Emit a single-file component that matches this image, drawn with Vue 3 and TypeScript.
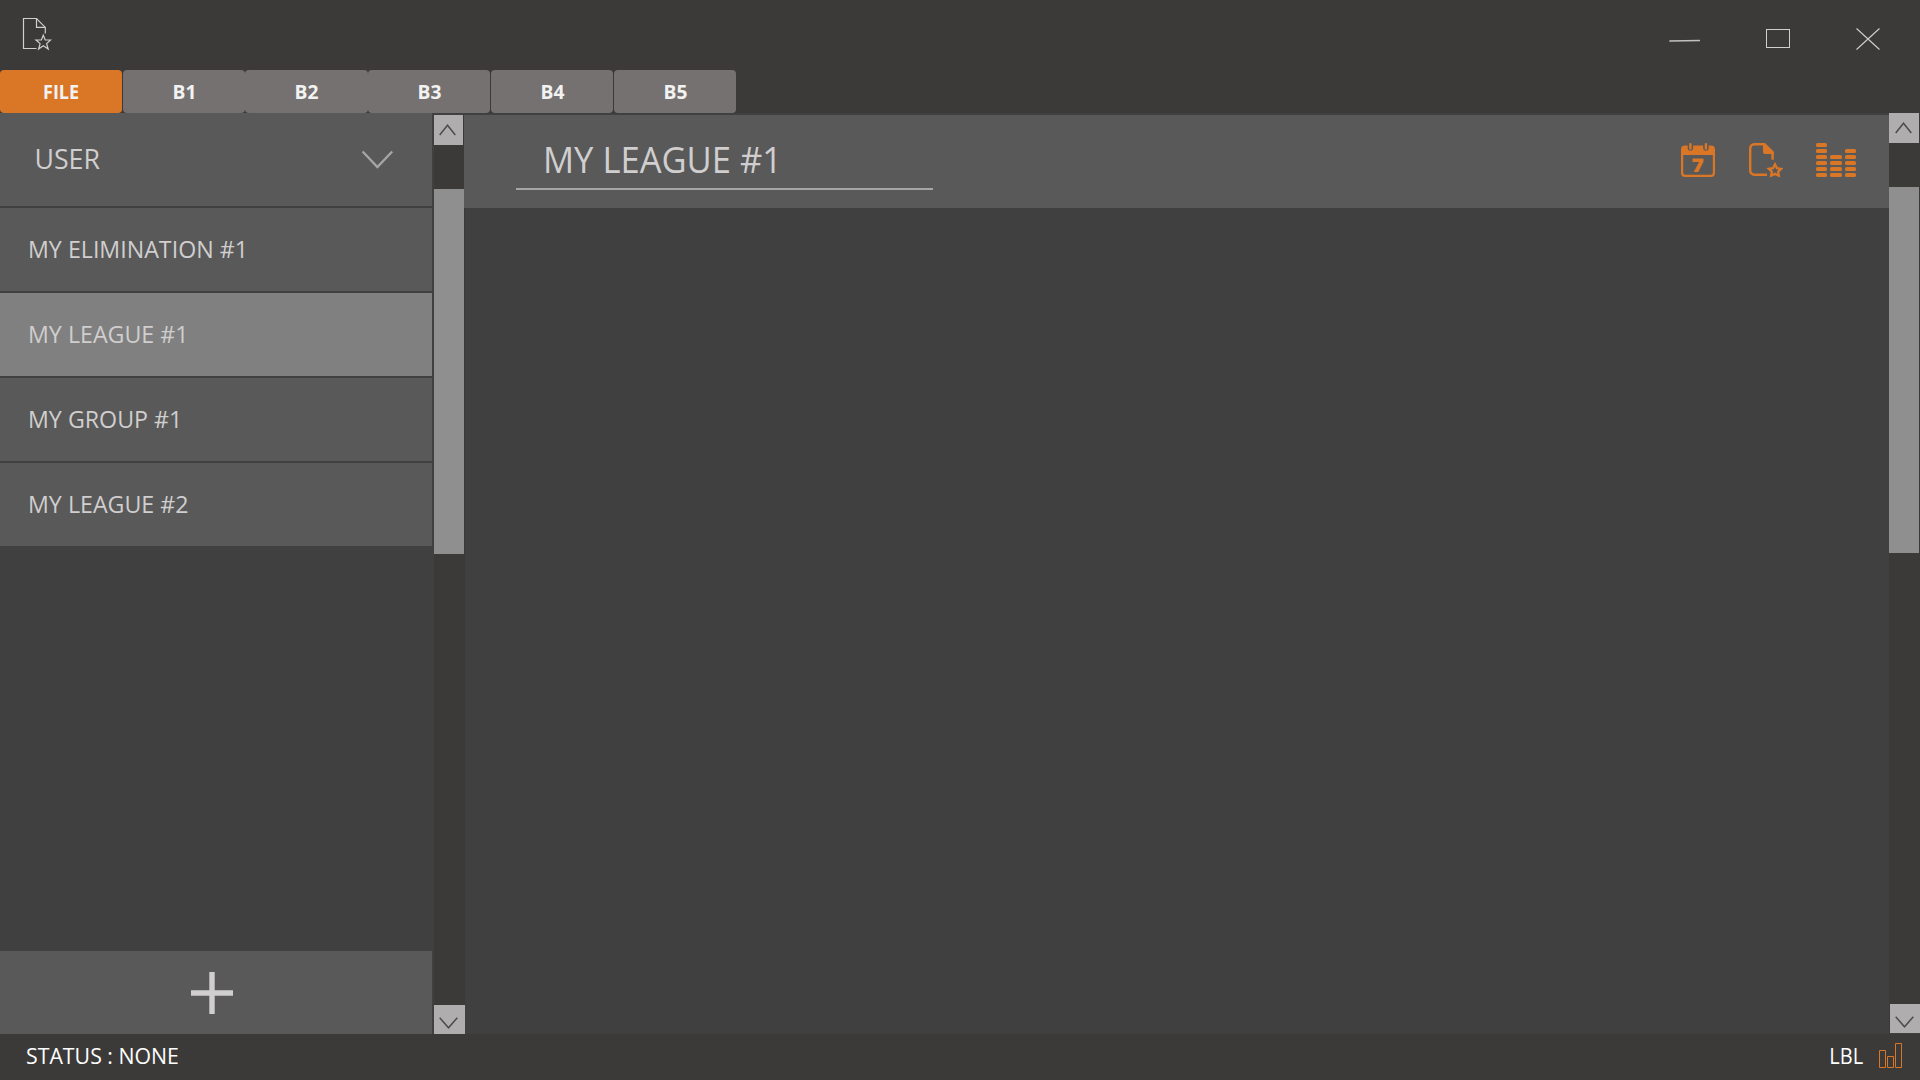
<script setup lang="ts">
import { ref } from 'vue'

const tabs = ['FILE', 'B1', 'B2', 'B3', 'B4', 'B5']
const activeTab = ref('FILE')

const entries = ['MY ELIMINATION #1', 'MY LEAGUE #1', 'MY GROUP #1', 'MY LEAGUE #2']
const selected = ref(1)

// Levels of the equalizer icon: column x, width, first row
const levels = [
  { x: 0, w: 11, from: 0 },
  { x: 14, w: 12, from: 2 },
  { x: 29, w: 11, from: 1 },
]
const rowsFrom = (from: number) => [0, 1, 2, 3, 4, 5].filter((r) => r >= from)
</script>

<template>
  <div class="window">
    <header class="titlebar">
      <svg class="app-icon" width="30" height="34" viewBox="0 0 30 34" fill="none" stroke="#d0cece" stroke-width="1.2">
        <path d="M14.5 31.5H1.5V1.5H14.5L23.3 10.4V16.5" />
        <path d="M14.5 1.5V10.4H23.3" />
        <path d="M21.3 18.2L23.2 23H28.6L24.6 26.6L26.2 32L21.3 28.8L16.6 32L18.1 26.6L14 23H19.4Z" />
      </svg>
      <div class="controls">
        <svg width="32" height="24" viewBox="0 0 32 24"><path d="M1.3 13L32 12.5" stroke="#c4c2c0" stroke-width="1.3" /></svg>
        <svg width="24" height="24" viewBox="0 0 24 24"><rect x=".5" y="1.5" width="23" height="18" fill="none" stroke="#d0cece" /></svg>
        <svg width="24" height="24" viewBox="0 0 24 24"><path d="M.5 .5L23.5 21.5M23.5 .5L.5 21.5" stroke="#d0cece" stroke-width="1.1" /></svg>
      </div>
    </header>

    <nav class="tabs">
      <button v-for="tab in tabs" :key="tab" class="tab" :class="{ active: tab === activeTab }" @click="activeTab = tab">
        <span>{{ tab }}</span>
      </button>
    </nav>

    <div class="body">
      <aside class="sidebar">
        <div class="group">
          <span class="group-name">USER</span>
          <svg width="32" height="20" viewBox="0 0 32 20"><path d="M.6 1.5L15.4 17L30.2 1.5" fill="none" stroke="#a6a6a6" stroke-width="2.3" /></svg>
        </div>
        <div
          v-for="(entry, i) in entries"
          :key="entry"
          class="entry"
          :class="{ selected: i === selected }"
          @click="selected = i"
        >
          <span>{{ entry }}</span>
        </div>
        <div class="add">
          <svg width="42" height="42" viewBox="0 0 42 42"><path d="M21 0V42M0 21H42" stroke="#d0cece" stroke-width="5.4" /></svg>
        </div>
      </aside>

      <div class="scroll left">
        <div class="arrow up"><svg width="17" height="12" viewBox="0 0 17 12"><path d="M.7 11L8.5 1.2L16.3 11" /></svg></div>
        <div class="thumb"></div>
        <div class="arrow down"><svg width="19" height="12" viewBox="0 0 19 12"><path d="M.7 .7L9.5 10.8L18.3 .7" /></svg></div>
      </div>

      <main class="content">
        <div class="content-head">
          <div class="title"><span>MY LEAGUE #1</span></div>
          <div class="tools">
            <svg width="34" height="34" viewBox="0 0 34 34">
              <path
                fill="#da7726"
                fill-rule="evenodd"
                d="M4 2.5H6.7V5A2.7 2.7 0 0 0 12.1 5V2.5H22.2V5A2.7 2.7 0 0 0 27.6 5V2.5H30A4 4 0 0 1 34 6.5V30A4 4 0 0 1 30 34H4A4 4 0 0 1 0 30V6.5A4 4 0 0 1 4 2.5ZM2.2 12V29.8A2 2 0 0 0 4.2 31.8H29.8A2 2 0 0 0 31.8 29.8V12Z"
              />
              <path d="M9.4 1.2V5.6M24.9 1.2V5.6" stroke="#da7726" stroke-width="2.4" stroke-linecap="round" />
              <path d="M11.5 15.5H22.5V18.7L17.3 29H12.8L18.1 19H11.5Z" fill="#da7726" />
            </svg>
            <svg class="doc" width="34" height="34" viewBox="0 0 34 34">
              <path d="M18 31.7H5.4A4.2 4.2 0 0 1 1.2 27.5V5.4A4.2 4.2 0 0 1 5.4 1.2H15L23.6 9.8V16.8" fill="none" stroke="#da7726" stroke-width="2.4" />
              <path d="M14 0H16L24.8 8.8V11H16A2 2 0 0 1 14 9Z" fill="#da7726" />
              <path d="M26 21.2L28 25.2L32.2 25.8L29.2 28.7L29.9 32.8L26 30.8L22.1 32.8L22.8 28.7L19.8 25.8L24 25.2Z" fill="none" stroke="#da7726" stroke-width="2.3" />
            </svg>
            <svg class="bars" width="40" height="34" viewBox="0 0 40 34" fill="#da7726">
              <template v-for="l in levels" :key="l.x">
                <rect v-for="r in rowsFrom(l.from)" :key="r" :x="l.x" :y="r * 6" :width="l.w" height="4" rx="1.5" />
              </template>
            </svg>
          </div>
        </div>
      </main>

      <div class="scroll right">
        <div class="arrow up"><svg width="17" height="12" viewBox="0 0 17 12"><path d="M.7 11L8.5 1.2L16.3 11" /></svg></div>
        <div class="thumb"></div>
        <div class="arrow down"><svg width="19" height="12" viewBox="0 0 19 12"><path d="M.7 .7L9.5 10.8L18.3 .7" /></svg></div>
      </div>
    </div>

    <footer class="status">
      <span class="status-text">STATUS : NONE</span>
      <span class="label">LBL</span>
      <svg width="24" height="25" viewBox="0 0 24 25" fill="none" stroke="#da7726">
        <path d="M.5 7.5H6.5V24.5H.5ZM8.5 13.5H14.5V24.5H8.5ZM16.5 .5H22.5V24.5H16.5Z" />
      </svg>
    </footer>
  </div>
</template>

<style>
body {
  margin: 0;
  background: #3b3a38;
}
</style>

<style scoped>
.window {
  display: flex;
  flex-direction: column;
  width: 1920px;
  height: 1080px;
  overflow: hidden;
  background: #3b3a38;
  color: #d0cece;
  font-family: 'Open Sans', 'Noto Sans', sans-serif;
  white-space: nowrap;
}
.titlebar {
  display: flex;
  justify-content: space-between;
  height: 70px;
  flex: none;
  box-sizing: border-box;
  padding: 17px 40px 0 22px;
}
.controls {
  display: flex;
  gap: 66px;
  margin-top: 11px;
}
.tabs {
  display: flex;
  height: 43px;
  flex: none;
}
.tab {
  width: 122px;
  margin: 0 1px 0 0;
  padding: 0;
  border: 0;
  border-radius: 4px;
  background: #767171;
  color: #f2f2f2;
  font: 700 20px/43px 'Open Sans', sans-serif;
}
.tab:nth-child(2) {
  margin-right: 0;
}
.tab:nth-child(3) {
  width: 123px;
  margin-right: 0;
}
.tab span {
  display: inline-block;
  transform: scaleX(0.96);
}
.tab.active {
  background: #da7726;
}
.tab.active span {
  transform: scaleX(0.9);
}
.body {
  display: flex;
  height: 921px;
  flex: none;
  background: #404040;
}
.sidebar {
  display: flex;
  flex-direction: column;
  gap: 2px;
  width: 432px;
  margin-right: 2px;
}
.group,
.add {
  background: #595959;
}
.group {
  display: flex;
  justify-content: space-between;
  height: 93px;
  box-sizing: border-box;
  padding: 0 38px 0 34px;
  line-height: 90px;
}
.group svg {
  margin-top: 37px;
}
.group-name {
  font-size: 28px;
  transform: scaleX(0.955);
  transform-origin: 10px 0;
}
.entry {
  height: 83px;
  background: #595959;
  padding-left: 28px;
  font-size: 24px;
  line-height: 81px;
}
.entry span {
  display: inline-block;
  transform: scaleX(0.967);
  transform-origin: 0 0;
}
.entry.selected {
  background: #808080;
}
.add {
  height: 83px;
  margin-top: auto;
  padding-left: 191px;
}
.add svg {
  margin-top: 21px;
}
.scroll {
  display: flex;
  flex-direction: column;
  background: #3b3a38;
}
.arrow {
  display: flex;
  justify-content: center;
  background: #afadae;
}
.arrow path {
  fill: none;
  stroke: #4d4b4b;
  stroke-width: 1.5;
}
.up {
  height: 30px;
}
.up svg {
  margin: 9px 2px 0 0;
}
.down {
  height: 29px;
  margin-top: auto;
}
.down svg {
  margin: 12px 2px 0 0;
}
.thumb {
  height: 365px;
  margin-top: 44px;
  background: #8f8f8f;
}
.left {
  width: 31px;
  margin-right: -1px;
  border-top: 2px solid #404040;
}
.left .up {
  width: 29px;
}
.left .thumb {
  width: 30px;
}
.right {
  width: 31px;
  height: 920px;
}
.right .thumb,
.right .up {
  width: 30px;
}
.right .thumb {
  height: 366px;
}
.right .down {
  margin-left: 1px;
}
.content {
  flex: 1;
  padding-top: 2px;
}
.content-head {
  display: flex;
  justify-content: space-between;
  height: 93px;
  background: #595959;
}
.title {
  width: 417px;
  height: 75px;
  margin-left: 52px;
  box-sizing: border-box;
  padding-left: 27px;
  border-bottom: 2px solid #a6a6a6;
  font-size: 36px;
  line-height: 89px;
}
.title span {
  display: inline-block;
  transform: scaleX(0.96);
  transform-origin: 0 0;
}
.tools {
  display: flex;
  margin: 28px 33px 0 0;
}
.doc {
  margin: 0 33px 0 34px;
}
.status {
  display: flex;
  height: 46px;
  padding: 0 17px 0 26px;
  color: #fff;
  font-size: 22px;
  line-height: 42px;
}
.status-text {
  transform: scaleX(0.968);
  transform-origin: 0 0;
}
.label {
  margin-left: auto;
  margin-right: 16px;
  transform: scaleX(0.91);
  transform-origin: 100% 0;
}
.status svg {
  margin-top: 9px;
}
</style>
